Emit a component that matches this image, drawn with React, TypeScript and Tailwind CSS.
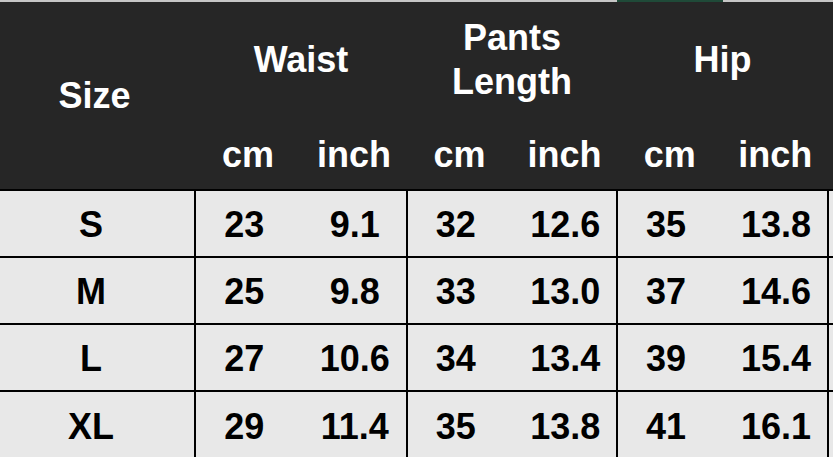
import React from "react";

const rows = [
  ["S", "23", "9.1", "32", "12.6", "35", "13.8"],
  ["M", "25", "9.8", "33", "13.0", "37", "14.6"],
  ["L", "27", "10.6", "34", "13.4", "39", "15.4"],
  ["XL", "29", "11.4", "35", "13.8", "41", "16.1"],
];

function Pair({ a, b, w }: { a: string; b: string; w: string }) {
  return (
    <div className={`flex h-full border-l-2 border-black ${w}`}>
      <div className="flex flex-1 items-center justify-center pr-[14px] pt-[2px]">{a}</div>
      <div className="flex flex-1 items-center justify-center pr-[3px] pt-[2px]">{b}</div>
    </div>
  );
}

function HeadGroup({ children, w }: { children: React.ReactNode; w: string }) {
  return (
    <div className={`flex flex-col ${w}`}>
      <div className="flex h-[115px] items-center justify-center text-center leading-[44px]">
        {children}
      </div>
      <div className="flex h-[72px] pt-[4px]">
        <div className="flex flex-1 items-center justify-center">cm</div>
        <div className="flex flex-1 items-center justify-center">inch</div>
      </div>
    </div>
  );
}

export default function App() {
  return (
    <div
      className="w-[833px] h-[457px] overflow-hidden bg-[#e8e8e8] text-[36px] font-bold"
      style={{ fontFamily: '"Liberation Sans", Arial, sans-serif' }}
    >
      <div className="flex h-[2px] bg-[#c6c6c6]">
        <div className="ml-[617px] w-[106px] bg-[#1f4a38]" />
      </div>
      <div className="flex h-[187px] bg-[#262626] text-white">
        <div className="flex w-[195px] items-center justify-center pr-[6px]">Size</div>
        <HeadGroup w="w-[212px]">Waist</HeadGroup>
        <HeadGroup w="w-[210px]">
          <span>
            Pants
            <br />
            Length
          </span>
        </HeadGroup>
        <HeadGroup w="w-[211px]">Hip</HeadGroup>
      </div>
      <div className="border-t-2 border-black text-black">
        {rows.map((r, i) => (
          <div
            key={i}
            className={`flex h-[67px] leading-none ${i < rows.length - 1 ? "border-b-2 border-black" : ""}`}
          >
            <div className="flex w-[194px] items-center justify-center pr-[12px] pt-[2px]">{r[0]}</div>
            <Pair a={r[1]} b={r[2]} w="w-[212px]" />
            <Pair a={r[3]} b={r[4]} w="w-[210px]" />
            <Pair a={r[5]} b={r[6]} w="w-[211px]" />
            <div className="flex-1 border-l-2 border-black" />
          </div>
        ))}
      </div>
    </div>
  );
}
